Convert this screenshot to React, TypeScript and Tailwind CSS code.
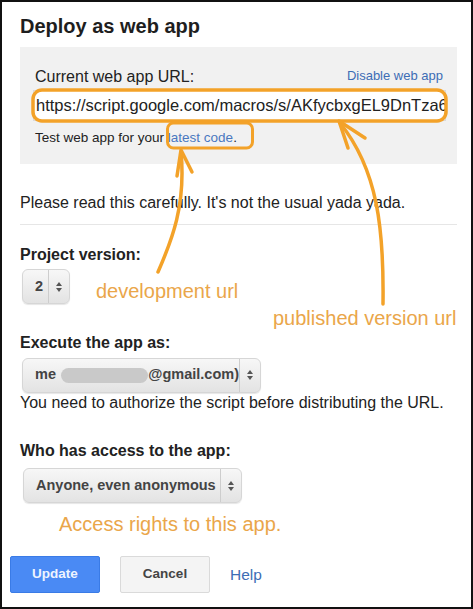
import React from "react";

const FONT = "font-['Liberation_Sans',Arial,sans-serif]";

function Arrows() {
  return (
    <svg width="6" height="10" viewBox="0 0 6 10" aria-hidden>
      <path d="M0 4 L3 0 L6 4 Z" fill="#555" />
      <path d="M0 6 L6 6 L3 10 Z" fill="#555" />
    </svg>
  );
}

function Select({ className, children }: { className: string; children: React.ReactNode }) {
  return (
    <div
      className={
        "flex h-[35px] rounded-[6px] border border-[#d6d6d6] bg-gradient-to-b from-[#f7f7f7] to-[#e3e3e3] shadow-[0_1px_1px_rgba(0,0,0,0.1)] " +
        className
      }
    >
      <div className="flex min-w-0 flex-1 items-center pl-[12px] text-[14.5px] font-bold text-[#444]">
        {children}
      </div>
      <div className="flex w-[21px] items-center justify-center border-l border-[#cdcdcd]">
        <Arrows />
      </div>
    </div>
  );
}

function Overlay() {
  // hand-drawn orange annotations over the dialog
  return (
    <svg
      className="pointer-events-none absolute left-0 top-0"
      width="473"
      height="609"
      viewBox="0 0 473 609"
      fill="none"
      stroke="#f3a229"
      strokeWidth="3.5"
      strokeLinecap="round"
      strokeLinejoin="round"
    >
      <rect x="33" y="90" width="413" height="31" rx="9" />
      <rect x="167.5" y="123" width="85" height="25" rx="6" strokeWidth="3" />
      <path d="M158 272 C 172 240, 186 205, 181 152" />
      <path d="M177 176 L181 150 L192 172" />
      <path d="M383 304 C 384 230, 378 170, 340 123" />
      <path d="M365 138 L339 121 L348 148" />
    </svg>
  );
}

export default function App() {
  return (
    <div
      className={`relative h-[609px] w-[473px] overflow-hidden bg-white text-[#222] shadow-[inset_0_0_0_2px_#111] ${FONT}`}
    >
      <div className="flex flex-col pl-[20px] pt-[13.5px]">
        <h1 className="text-[20px] font-bold leading-[24px] text-[#1e1e1e]">Deploy as web app</h1>

        <div className="mt-[9.5px] w-[437px] bg-[#f1f1f1] pb-[17px] pl-[13px] pr-[11px] pt-[19.5px]">
          <div className="flex items-end justify-between pl-[2px] pr-[3px]">
            <span className="text-[16px] leading-[20px]">Current web app URL:</span>
            <span className="mb-[2px] text-[13px] leading-[18px] text-[#3d6db5]">Disable web app</span>
          </div>
          <div className="mt-[3.5px] h-[31px] w-[413px] overflow-hidden whitespace-nowrap border border-[#dadada] bg-white pl-[2px] text-[16.5px] leading-[29px]">
            https://script.google.com/macros/s/AKfycbxgEL9DnTza6Yq
          </div>
          <p className="mt-[8px] pl-[2px] text-[13.5px] leading-[18px]">
            Test web app for your <span className="text-[#4a78c0]">latest code</span>.
          </p>
        </div>

        <p className="mt-[28.5px] text-[16px] leading-[20px]">
          Please read this carefully. It's not the usual yada yada.
        </p>
        <div className="mt-[11.5px] h-px w-[437px] bg-[#e6e6e6]" />

        <h2 className="mt-[20px] text-[16px] font-bold leading-[20px]">Project version:</h2>
        <div className="mt-[4px] flex items-start">
          <Select className="ml-[2px] w-[48px]">2</Select>
          <span className="ml-[26px] mt-[10px] text-[20px] leading-[24px] text-[#eaa64a]">development url</span>
        </div>

        <h2 className="mt-[28.5px] text-[16px] font-bold leading-[20px]">Execute the app as:</h2>
        <Select className="ml-[2px] mt-[5px] w-[239px]">
          <span>me</span>
          <span className="ml-[5px] h-[15px] w-[89px] rounded-full bg-[#c9c9c9]" />
          <span>@gmail.com)</span>
        </Select>
        <p className="text-[16px] leading-[20px]">
          You need to authorize the script before distributing the URL.
        </p>

        <h2 className="mt-[28px] text-[16px] font-bold leading-[20px]">Who has access to the app:</h2>
        <Select className="ml-[3px] mt-[7.5px] w-[219px]">Anyone, even anonymous</Select>
        <p className="ml-[39px] mt-[8.5px] text-[20px] leading-[24px] text-[#eaa64a]">
          Access rights to this app.
        </p>

        <div className="-ml-[10px] mt-[20.5px] flex items-center">
          <button className="h-[37px] w-[90px] rounded-[2px] border border-[#3a7be6] bg-[#4a8af4] text-[13.5px] font-bold text-[#eef4ff]">
            Update
          </button>
          <button className="ml-[20px] h-[37px] w-[90px] rounded-[2px] border border-[#dadada] bg-[#f4f4f4] text-[13.5px] font-bold text-[#444]">
            Cancel
          </button>
          <span className="ml-[20px] text-[15.5px] leading-[20px] text-[#3d6db5]">Help</span>
        </div>
      </div>

      <span className="absolute left-[273px] top-[306px] text-[20px] leading-[24px] text-[#eaa64a]">
        published version url
      </span>
      <Overlay />
    </div>
  );
}
